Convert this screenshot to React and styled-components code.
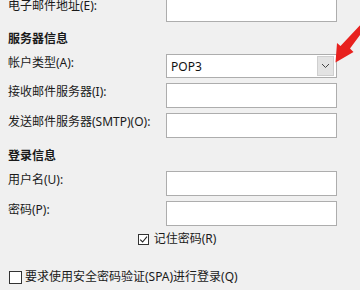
import React from 'react';
import styled, { createGlobalStyle } from 'styled-components';

const GlobalStyle = createGlobalStyle`
  html, body {
    margin: 0;
    padding: 0;
    background: #f0f0f0;
  }
  body {
    width: 360px;
    height: 290px;
    overflow: hidden;
    font-family: "Noto Sans", "Noto Sans CJK SC", sans-serif;
    font-size: 12px;
    color: #1a1a1a;
  }
`;

const Page = styled.div`
  position: relative;
  width: 360px;
  height: 290px;
  overflow: hidden;
  background: #f0f0f0;
`;

const Form = styled.div`
  display: flex;
  flex-direction: column;
  margin-top: -3px;
  padding-left: 8px;
`;

const Row = styled.div`
  display: grid;
  grid-template-columns: 158px 171px;
  align-items: start;
  margin-top: ${p => p.$gap || 0}px;
`;

const Label = styled.label`
  line-height: 18px;
  white-space: nowrap;
`;

const Section = styled.div`
  font-weight: 700;
  line-height: 18px;
  margin-top: ${p => p.$before || 9}px;
  margin-bottom: ${p => p.$after || 6}px;
`;

const Field = styled.div`
  box-sizing: border-box;
  height: ${p => p.$h || 25}px;
  background: #fff;
  border: 1px solid #adadad;
`;

const Combo = styled(Field)`
  display: flex;
  align-items: center;
  justify-content: space-between;
  padding: 0 2px 0 4px;
  font-size: 12px;
  color: #111;
`;

const DropButton = styled.div`
  box-sizing: border-box;
  width: 17px;
  height: 20px;
  background: #e3e3e3;
  border: 1px solid #cfcfcf;
  display: flex;
  align-items: center;
  justify-content: center;
`;

const CheckRow = styled.div`
  display: flex;
  align-items: center;
  justify-content: ${p => (p.$center ? 'center' : 'flex-start')};
  gap: ${p => p.$space || 5}px;
  line-height: 18px;
  margin-top: ${p => p.$gap || 0}px;
  padding-left: ${p => p.$pad || 0}px;
  padding-right: ${p => p.$padRight || 0}px;
  white-space: nowrap;
`;

const Box = styled.span`
  box-sizing: border-box;
  width: ${p => p.$size}px;
  height: ${p => p.$size}px;
  background: #fff;
  border: 1px solid #333;
  display: flex;
  align-items: center;
  justify-content: center;
`;

const Arrow = styled.svg`
  position: absolute;
  left: 0;
  top: 0;
  pointer-events: none;
`;

export default function App() {
  return (
    <Page>
      <GlobalStyle />
      <Form>
        <Row>
          <Label>电子邮件地址(E):</Label>
          <Field />
        </Row>

        <Section $before={8} $after={6}>服务器信息</Section>
        <Row>
          <Label>帐户类型(A):</Label>
          <Combo $h={24}>
            <span>POP3</span>
            <DropButton>
              <svg width="9" height="6" viewBox="0 0 9 6">
                <path d="M1 1 L4.5 4.5 L8 1" fill="none" stroke="#444" strokeWidth="1" />
              </svg>
            </DropButton>
          </Combo>
        </Row>
        <Row $gap={5}>
          <Label>接收邮件服务器(I):</Label>
          <Field />
        </Row>
        <Row $gap={5}>
          <Label>发送邮件服务器(SMTP)(O):</Label>
          <Field />
        </Row>

        <Section $after={6}>登录信息</Section>
        <Row>
          <Label>用户名(U):</Label>
          <Field />
        </Row>
        <Row $gap={5}>
          <Label>密码(P):</Label>
          <Field />
        </Row>

        <CheckRow $center $gap={4} $space={5} $padRight={14}>
          <Box $size={11}>
            <svg width="9" height="9" viewBox="0 0 9 9">
              <path d="M1.2 4.6 L3.6 7 L8 1.6" fill="none" stroke="#222" strokeWidth="1.1" />
            </svg>
          </Box>
          <span>记住密码(R)</span>
        </CheckRow>

        <CheckRow $gap={20} $pad={1} $space={3}>
          <Box $size={13} />
          <span>要求使用安全密码验证(SPA)进行登录(Q)</span>
        </CheckRow>
      </Form>

      <Arrow width="360" height="290" viewBox="0 0 360 290">
        <path d="M366 19 L369.5 22 L350 48.5 L353.5 52 L335.5 62.5 L337 43 L340.5 46 Z" fill="#e8211e" />
      </Arrow>
    </Page>
  );
}
